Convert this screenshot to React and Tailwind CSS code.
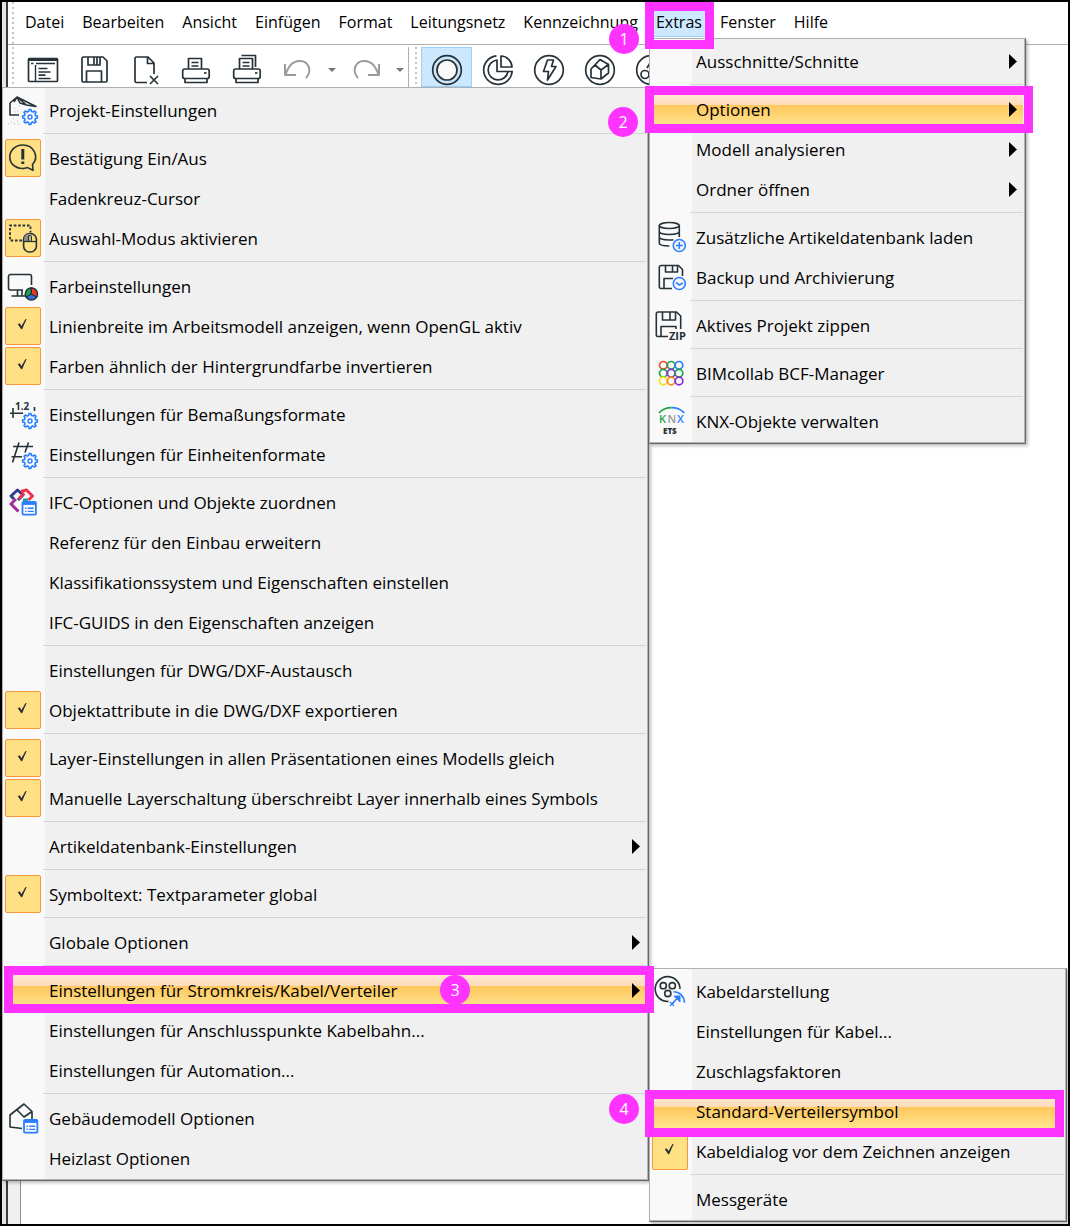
import React from "react";

const INK = "#263238";
const BLUE = "#2b7fff";

/* ---------- shared icon parts ---------- */

function MenuIcon({ children }) {
  return (
    <svg
      viewBox="0 0 36 38"
      className="col-start-1 row-start-1 w-[36px] h-[38px] pointer-events-none"
      fill="none"
      stroke={INK}
      strokeWidth="1.6"
      strokeLinejoin="round"
      aria-hidden="true"
    >
      {children}
    </svg>
  );
}

function ToolIcon({ children, className = "w-8 h-8" }) {
  return (
    <svg viewBox="0 0 32 32" className={className} fill="none" stroke={INK} strokeWidth="1.7" strokeLinejoin="round" aria-hidden="true">
      {children}
    </svg>
  );
}

function Gear() {
  return (
    <g stroke={BLUE} transform="translate(25 26)">
      <circle r="7.2" fill="#f9f9f9" stroke="none" />
      <path d="M-1.4 -5.6 L-1 -7.4 H1 L1.4 -5.6 L3 -5 L4.6 -6 L6 -4.6 L5 -3 L5.6 -1.4 L7.4 -1 V1 L5.6 1.4 L5 3 L6 4.6 L4.6 6 L3 5 L1.4 5.6 L1 7.4 H-1 L-1.4 5.6 L-3 5 L-4.6 6 L-6 4.6 L-5 3 L-5.6 1.4 L-7.4 1 V-1 L-5.6 -1.4 L-5 -3 L-6 -4.6 L-4.6 -6 L-3 -5 Z" />
      <circle r="2" strokeWidth="1.4" />
    </g>
  );
}

function ListWindow({ x, y }) {
  return (
    <g stroke={BLUE} transform={`translate(${x} ${y})`}>
      <rect width="13.4" height="12.6" rx="1" fill="#f9f9f9" strokeWidth="1.8" />
      <path d="M0 1.6h13.4" strokeWidth="2.6" />
      <path d="M2.6 6.2h1.4M5.2 6.2h6M2.6 9.4h1.4M5.2 9.4h6" strokeWidth="1.4" />
    </g>
  );
}

/* ---------- menu icons ---------- */

const ProjectIcon = () => (
  <MenuIcon>
    <path d="M14 24H5V12L12 6l19 9.500-9.500-1.500L12 6M12 6l-3 5M12 6l3 6 6.500 2" />
    <path d="M3 33h1M6 31h1M9 33h1M12 30h1M8 28h1M13 33h1M9 17h1M12 20h1M14 15h1M10 21h1" stroke="#b5b5b5" strokeWidth="1" />
    <Gear />
  </MenuIcon>
);

const BubbleIcon = () => (
  <MenuIcon>
    <path d="M27.500 25.500C34.500 18 29 6 17.800 6 10 6 4.800 11.500 4.800 18S10 29.500 17.800 29.500c1.800 0 3.200-.4 4.700-.9l5.500 2.700z" />
    <path d="M17.800 10v10.500M17.800 22.600v2.400" strokeWidth="3" />
  </MenuIcon>
);

const SelectModeIcon = () => (
  <MenuIcon>
    <path d="M17 21.500H5V6.500h20.500v7" strokeDasharray="2.600 1.800" strokeWidth="1.800" />
    <rect x="18.600" y="14.500" width="12.800" height="18.500" rx="6" fill="#ffe083" />
    <path d="M19 22v-2c0-3 2.500-5.300 5.500-5.500V22z" fill="#8b8b8b" stroke="none" />
    <path d="M18.600 22.500h12.800" strokeWidth="1.300" />
    <rect x="23.600" y="16.500" width="2.800" height="6" rx="1.400" fill="#ffe083" strokeWidth="1.200" />
  </MenuIcon>
);

const ColorIcon = () => (
  <MenuIcon>
    <path d="M18 23H5.500a2 2 0 0 1-2-2V9.500a2 2 0 0 1 2-2h19a2 2 0 0 1 2 2V18M6.500 29H20M12.500 23v6M17 23v6" />
    <circle cx="26.400" cy="27" r="6" fill="#2f6fe0" />
    <path d="M26.400 27V21a6 6 0 0 0-5.200 9z" fill="#1fa34a" strokeWidth="1.200" />
    <path d="M26.400 27V21a6 6 0 0 1 5.200 9z" fill="#ee3a24" strokeWidth="1.200" />
  </MenuIcon>
);

const DimensionIcon = () => (
  <MenuIcon>
    <text x="10" y="14.500" fill={INK} stroke="none" fontSize="10" fontWeight="700" fontFamily="Open Sans, sans-serif">1.2</text>
    <path d="M5 18.300h13M8 13v10M29.500 12v4" />
    <Gear />
  </MenuIcon>
);

const UnitIcon = () => (
  <MenuIcon>
    <path d="M8 11.500h20M6.500 21.700H17M14 7.500l-6.500 20M23.500 7.500L20 17.500" />
    <Gear />
  </MenuIcon>
);

const IfcIcon = () => (
  <MenuIcon>
    <g strokeWidth="3">
      <path d="M9 16l-3-3 6.500-6L18 12l-5 5" stroke="#2f3f93" />
      <path d="M16 8.500L21.500 7l6 6-4 4M19 10l-5 6" stroke="#f0304a" />
      <path d="M11 16l-5 5 7.500 7.500" stroke="#a32b9b" />
      <path d="M18 17h5" stroke="#18a49a" />
    </g>
    <ListWindow x="17.500" y="19" />
  </MenuIcon>
);

const BuildingIcon = () => (
  <MenuIcon>
    <path d="M17 29.500L5 28V16L19 5l8 7.500V20M12 11l7 7 8-5.500" />
    <ListWindow x="19" y="21" />
  </MenuIcon>
);

const DatabaseIcon = () => (
  <MenuIcon>
    <ellipse cx="17.300" cy="7.500" rx="10" ry="3" />
    <path d="M7.300 7.500V25c0 1.800 4 3 10 3M27.300 7.500V19M7.300 13.500c0 1.800 4.500 3 10 3s10-1.200 10-3M7.300 19c0 1.800 4.500 3 10 3 1.500 0 3 0 4-.3" />
    <circle cx="27.300" cy="27.500" r="6" stroke={BLUE} fill="#f9f9f9" />
    <path d="M27.300 24v7M23.800 27.500h7" stroke={BLUE} />
  </MenuIcon>
);

const BackupIcon = () => (
  <MenuIcon>
    <path d="M20 30.500H9a1.700 1.700 0 0 1-1.700-1.700V9.200A1.700 1.700 0 0 1 9 7.500h17.500l4 4V18M13.500 7.500V14h12V7.500M20.500 7.500V14M12 30.500V20.500h9" />
    <circle cx="27.300" cy="25.500" r="6" stroke={BLUE} fill="#f9f9f9" />
    <path d="M24 24.500l3.300 2.500 3.500-2" stroke={BLUE} />
  </MenuIcon>
);

const ZipIcon = () => (
  <MenuIcon>
    <path d="M16 30.500H6a1.700 1.700 0 0 1-1.700-1.700V7.700A1.700 1.700 0 0 1 6 6h18.500l4.200 4V23M10.500 6v8h13V6M18 6v8M9 30.500V20.500h15V23" />
    <text x="17" y="34" fill={INK} stroke="none" fontSize="11" fontWeight="700" fontFamily="Open Sans, sans-serif">ZIP</text>
  </MenuIcon>
);

const bcfDots = [
  [11.3, 11.3, "#f4472c"], [19.2, 11.3, "#1fa34a"], [27, 11.3, "#2b7fff"],
  [11.3, 19.2, "#1fa34a"], [19.2, 19.2, "#8a2be2"], [27, 19.2, "#1fa34a"],
  [11.3, 27, "#f7e018"], [19.2, 27, "#f98a1c"], [27, 27, "#8a2be2"],
];

const BcfIcon = () => (
  <MenuIcon>
    {bcfDots.map(([x, y, color]) => (
      <circle key={`${x}-${y}`} cx={x} cy={y} r="3.800" stroke={color} strokeWidth="1.700" />
    ))}
  </MenuIcon>
);

const KnxIcon = () => (
  <MenuIcon>
    <path d="M7 11C10 7.500 15 5.700 19.700 5.700" stroke="#1fa34a" strokeWidth="1.800" />
    <path d="M19.700 5.700c5 0 9.500 1.800 12.600 5.300" stroke={BLUE} strokeWidth="1.800" />
    <g stroke="none" fontFamily="Open Sans, sans-serif" fontWeight="600">
      <text x="7" y="20.500" fontSize="11" fill="#1fa34a">
        K<tspan x="15.500" fill="#9a9a9a">N</tspan><tspan x="25" fill={BLUE}>X</tspan>
      </text>
      <text x="11" y="32" fontSize="8" fontWeight="800" fill={INK}>ETS</text>
    </g>
  </MenuIcon>
);

const CableIcon = () => (
  <MenuIcon>
    <path d="M28 17A12.400 12.400 0 1 0 16.500 29.400" />
    <circle cx="11.300" cy="13.700" r="3.100" />
    <circle cx="20.300" cy="13.700" r="3.100" />
    <circle cx="15.800" cy="21.500" r="3.100" />
    <g stroke={BLUE}>
      <path d="M21.500 19.800c6 0 10.500 4 11 11M20 32l6-6.500" />
      <path d="M22 24h6v6z" fill={BLUE} strokeWidth="1" />
      <path d="M18 30l4 4M18 34l4-4" strokeWidth="1.200" />
    </g>
  </MenuIcon>
);

const CheckIcon = () => (
  <MenuIcon>
    <path d="M12.800 17.200l1.800-.9 1.900 2.700 3.800-6.800 1.400-.2-4.600 10.200h-.9z" fill={INK} stroke="none" />
  </MenuIcon>
);

/* ---------- toolbar icons ---------- */

const PrinterShape = () => (
  <>
    <path d="M8.500 15V4.500h13V15M11.500 8.500h7M11.500 12h7M5 24v4.500h22V24" />
    <rect x="2.700" y="15" width="26.500" height="9.500" rx="2" />
    <path d="M24 19h2.500" />
  </>
);

const ListToolIcon = () => (
  <ToolIcon>
    <rect x="1.500" y="4.500" width="29" height="23" rx="1" />
    <path d="M1.500 5.500h29" strokeWidth="3" />
    <path d="M4 9.500h2.500M9 9.500h19M8.500 11v16" strokeWidth="1.400" />
    <path d="M11.500 14.500h9M11.500 18h12M11.500 21.200h7M11.500 24.500h12" />
  </ToolIcon>
);

const SaveToolIcon = () => (
  <ToolIcon>
    <path d="M5 3h20l4 4v19.500a1.500 1.500 0 0 1-1.500 1.500h-22A1.500 1.500 0 0 1 4 26.500V4.500A1.500 1.500 0 0 1 5 3zM10 3v8h12V3M16 3v8M19 3v8M8.500 28V17h15v11" />
  </ToolIcon>
);

const DeleteFileIcon = () => (
  <ToolIcon>
    <path d="M18 28.500H7.500a1.500 1.500 0 0 1-1.500-1.500V4.500A1.500 1.500 0 0 1 7.500 3H19l6 6v11M18.500 3v6.500H25M21 22l8 8M21 30l8-8" />
  </ToolIcon>
);

const PrintIcon = () => (
  <ToolIcon>
    <PrinterShape />
  </ToolIcon>
);

const PrintAllIcon = () => (
  <ToolIcon>
    <PrinterShape />
    <path d="M10.500 1.500h14V13" />
  </ToolIcon>
);

const UndoIcon = () => (
  <ToolIcon>
    <path d="M3 10v11h11M3.500 20.500C6 14 9 7 18 7c8 0 13 9 6 17" stroke="#9b9b9b" strokeWidth="2" />
  </ToolIcon>
);

const RedoIcon = () => (
  <ToolIcon>
    <path d="M29 10v11H18M28.500 20.500C26 14 23 7 14 7 6 7 1 16 8 24" stroke="#9b9b9b" strokeWidth="2" />
  </ToolIcon>
);

const RingIcon = () => (
  <ToolIcon>
    <circle cx="16" cy="16" r="14.300" />
    <circle cx="16" cy="16" r="10" fill="#f9f9f9" />
  </ToolIcon>
);

const PieIcon = () => (
  <ToolIcon>
    <path d="M14.500 1.800A14.300 14.300 0 1 0 30.200 17.500h-4" />
    <path d="M15 6a10 10 0 1 0 11 11.500H15z" />
    <path d="M19 2v11h11A11.500 11.500 0 0 0 19 2z" />
  </ToolIcon>
);

const BoltIcon = () => (
  <ToolIcon>
    <circle cx="16" cy="16" r="14.300" />
    <path d="M14.500 6h6L18.500 12.500h4.500L14.500 26l1-8.500h-5z" />
  </ToolIcon>
);

const HouseIcon = () => (
  <ToolIcon>
    <circle cx="16" cy="16" r="14.300" />
    <path d="M7 15l9-9.500 8.500 5V19L17 25l-10-1.500zM7 15l4-4 6 5v9M17 16l7.500-5.500M11 11l5-5.500" />
  </ToolIcon>
);

const DevicesIcon = () => (
  <ToolIcon>
    <circle cx="16" cy="16" r="14.300" />
    <circle cx="10" cy="20.500" r="4" />
    <path d="M12 14l5-8" />
  </ToolIcon>
);

/* ---------- data ---------- */

const menuBar = ["Datei", "Bearbeiten", "Ansicht", "Einfügen", "Format", "Leitungsnetz", "Kennzeichnung", "Extras", "Fenster", "Hilfe"];

const fileTools = [
  { name: "Projektliste", icon: ListToolIcon },
  { name: "Speichern", icon: SaveToolIcon },
  { name: "Datei schließen", icon: DeleteFileIcon },
  { name: "Drucken", icon: PrintIcon },
  { name: "Alles drucken", icon: PrintAllIcon },
];

const viewTools = [
  { name: "Alle Gewerke", icon: RingIcon, active: true },
  { name: "Teilansicht", icon: PieIcon },
  { name: "Elektro", icon: BoltIcon },
  { name: "Gebäude", icon: HouseIcon },
  { name: "Geräte", icon: DevicesIcon },
];

const SEP = "separator";

const extrasMenu = [
  { label: "Ausschnitte/Schnitte", sub: true },
  SEP,
  { label: "Optionen", sub: true, active: true },
  { label: "Modell analysieren", sub: true },
  { label: "Ordner öffnen", sub: true },
  SEP,
  { label: "Zusätzliche Artikeldatenbank laden", icon: DatabaseIcon },
  { label: "Backup und Archivierung", icon: BackupIcon },
  SEP,
  { label: "Aktives Projekt zippen", icon: ZipIcon },
  SEP,
  { label: "BIMcollab BCF-Manager", icon: BcfIcon },
  SEP,
  { label: "KNX-Objekte verwalten", icon: KnxIcon },
];

const optionsMenu = [
  { label: "Projekt-Einstellungen", icon: ProjectIcon },
  SEP,
  { label: "Bestätigung Ein/Aus", icon: BubbleIcon, checked: true },
  { label: "Fadenkreuz-Cursor" },
  { label: "Auswahl-Modus aktivieren", icon: SelectModeIcon, checked: true },
  SEP,
  { label: "Farbeinstellungen", icon: ColorIcon },
  { label: "Linienbreite im Arbeitsmodell anzeigen, wenn OpenGL aktiv", checked: true },
  { label: "Farben ähnlich der Hintergrundfarbe invertieren", checked: true },
  SEP,
  { label: "Einstellungen für Bemaßungsformate", icon: DimensionIcon },
  { label: "Einstellungen für Einheitenformate", icon: UnitIcon },
  SEP,
  { label: "IFC-Optionen und Objekte zuordnen", icon: IfcIcon },
  { label: "Referenz für den Einbau erweitern" },
  { label: "Klassifikationssystem und Eigenschaften einstellen" },
  { label: "IFC-GUIDS in den Eigenschaften anzeigen" },
  SEP,
  { label: "Einstellungen für DWG/DXF-Austausch" },
  { label: "Objektattribute in die DWG/DXF exportieren", checked: true },
  SEP,
  { label: "Layer-Einstellungen in allen Präsentationen eines Modells gleich", checked: true },
  { label: "Manuelle Layerschaltung überschreibt Layer innerhalb eines Symbols", checked: true },
  SEP,
  { label: "Artikeldatenbank-Einstellungen", sub: true },
  SEP,
  { label: "Symboltext: Textparameter global", checked: true },
  SEP,
  { label: "Globale Optionen", sub: true },
  SEP,
  { label: "Einstellungen für Stromkreis/Kabel/Verteiler", sub: true, active: true },
  { label: "Einstellungen für Anschlusspunkte Kabelbahn..." },
  { label: "Einstellungen für Automation..." },
  SEP,
  { label: "Gebäudemodell Optionen", icon: BuildingIcon },
  { label: "Heizlast Optionen" },
];

const cableMenu = [
  { label: "Kabeldarstellung", icon: CableIcon },
  { label: "Einstellungen für Kabel..." },
  { label: "Zuschlagsfaktoren" },
  { label: "Standard-Verteilersymbol", active: true },
  { label: "Kabeldialog vor dem Zeichnen anzeigen", checked: true },
  SEP,
  { label: "Messgeräte" },
];

/* ---------- building blocks ---------- */

function MenuRow({ item }) {
  const Icon = item.icon || (item.checked ? CheckIcon : null);
  const base = "w-full h-10 grid grid-cols-[36px_1fr_auto] items-center gap-x-2 text-left whitespace-nowrap";

  if (item.checked) {
    return (
      <label className={base}>
        <input
          type="checkbox"
          defaultChecked
          className="col-start-1 row-start-1 appearance-none w-[36px] h-[38px] rounded-xs border border-[#f7963c] bg-[#ffe083]"
        />
        {Icon && <Icon />}
        <span className="col-start-2 pt-[2px]">{item.label}</span>
      </label>
    );
  }

  return (
    <button
      type="button"
      className={`${base} ${item.active ? "bg-[linear-gradient(to_bottom,#ffeedd_0%,#fcdcba_40%,#ffc75c_40%,#ffe796_100%)]" : ""}`}
    >
      {Icon && <Icon />}
      <span className="col-start-2 pt-[2px]">{item.label}</span>
      {item.sub && (
        <svg viewBox="0 0 8 15" className="col-start-3 w-2 h-[15px] mr-[6px]" aria-hidden="true">
          <path d="M0 0l8 7.500-8 7.500z" fill="#000" />
        </svg>
      )}
    </button>
  );
}

function Menu({ label, items, className }) {
  return (
    <div
      aria-label={label}
      className={`absolute p-[2px] border border-t-[#b0b0b0] border-l-[#b0b0b0] border-r-[#666] border-b-[#666] bg-[linear-gradient(to_right,#f9f9f9_42px,#f0f0f0_42px)] shadow-[inset_-1px_-1px_0_#b4b4b4,2px_2px_3px_rgba(0,0,0,0.25)] ${className}`}
    >
      {items.map((item, i) =>
        item === SEP ? (
          <div key={i} className="h-2 pt-[3px] pl-[38px]">
            <div className="h-px bg-[#d4d4d4]" />
          </div>
        ) : (
          <MenuRow key={item.label} item={item} />
        )
      )}
    </div>
  );
}

function ToolButton({ tool }) {
  const Icon = tool.icon;
  return (
    <button
      type="button"
      aria-label={tool.name}
      className={`w-[51px] h-full shrink-0 flex items-center justify-center pt-[5px] ${
        tool.active ? "bg-[#cce8ff] border border-[#99d1ff]" : ""
      }`}
    >
      <Icon />
    </button>
  );
}

function DropCaret({ label }) {
  return (
    <button type="button" aria-label={label} className="w-[17px] h-full shrink-0 flex items-center justify-center pt-[5px]">
      <svg viewBox="0 0 8 4" className="w-2 h-1" aria-hidden="true">
        <path d="M0 0h8L4 4z" fill="#777" />
      </svg>
    </button>
  );
}

function Grip() {
  return <div className="w-[2px] self-stretch shrink-0 bg-[repeating-linear-gradient(to_bottom,#c4c4c4_0_2px,transparent_2px_5px)]" />;
}

function Frame({ className }) {
  return <div className={`absolute z-20 border-[9px] border-[#ff33ff] pointer-events-none ${className}`} />;
}

function Step({ n, className }) {
  return (
    <div className={`absolute z-20 w-[30px] h-[30px] rounded-full bg-[#ff33ff] text-white text-base flex items-center justify-center ${className}`}>
      {n}
    </div>
  );
}

export default function App() {
  return (
    <div className="relative min-h-screen flex flex-col overflow-hidden border-2 border-black bg-white text-[17px] leading-6 text-black font-['Open_Sans','Noto_Sans',sans-serif]">
      <div className="grow flex">
        {/* Window edge */}
        <div className="w-[6px] shrink-0 bg-[#e4e4e4] border-r-2 border-[#3c3c3c]" />

        <div className="grow min-w-0 flex flex-col">
          {/* Menu bar */}
          <header className="h-[43px] shrink-0 flex items-start pl-1 border-b border-[#b0b0b0]">
            <Grip />
            <nav className="flex pt-[5px] pl-[2px] text-base">
              {menuBar.map((name) => (
                <button
                  key={name}
                  type="button"
                  className={`h-[30px] px-[9px] whitespace-nowrap ${name === "Extras" ? "bg-[#cce8ff] border-b border-[#99d1ff]" : ""}`}
                >
                  {name}
                </button>
              ))}
            </nav>
          </header>

          {/* Toolbar */}
          <div className="h-[42px] shrink-0 flex items-stretch pl-1 pt-[2px]">
            <Grip />
            <div className="flex pl-[3px] border-r border-[#b0b0b0]">
              {fileTools.map((tool) => (
                <ToolButton key={tool.name} tool={tool} />
              ))}
              <ToolButton tool={{ name: "Rückgängig", icon: UndoIcon }} />
              <DropCaret label="Rückgängig Liste" />
              <ToolButton tool={{ name: "Wiederholen", icon: RedoIcon }} />
              <DropCaret label="Wiederholen Liste" />
            </div>
            <div className="flex pl-[6px] gap-1">
              <Grip />
              <div className="flex">
                {viewTools.map((tool) => (
                  <ToolButton key={tool.name} tool={tool} />
                ))}
              </div>
            </div>
          </div>

          {/* Drawing area */}
          <main className="grow flex">
            <div className="w-[13px] shrink-0 bg-[#f0f0f0] border-r border-[#8a8f99]" />
          </main>
        </div>
      </div>

      {/* Open menus */}
      <Menu label="Optionen" items={optionsMenu} className="left-0 top-[85px] w-[647px]" />
      <Menu label="Extras" items={extrasMenu} className="left-[647px] top-[36px] w-[377px]" />
      <Menu label="Stromkreis/Kabel/Verteiler" items={cableMenu} className="left-[647px] top-[966px] w-[418px]" />

      {/* Step markers */}
      <Frame className="left-[643px] top-0 w-[69px] h-[47px]" />
      <Frame className="left-[643px] top-[84px] w-[388px] h-[47px]" />
      <Frame className="left-[2px] top-[964px] w-[650px] h-[47px]" />
      <Frame className="left-[643px] top-[1088px] w-[419px] h-[47px]" />
      <Step n={1} className="left-[607px] top-[22px]" />
      <Step n={2} className="left-[606px] top-[105px]" />
      <Step n={3} className="left-[438px] top-[973px]" />
      <Step n={4} className="left-[607px] top-[1092px]" />
    </div>
  );
}
